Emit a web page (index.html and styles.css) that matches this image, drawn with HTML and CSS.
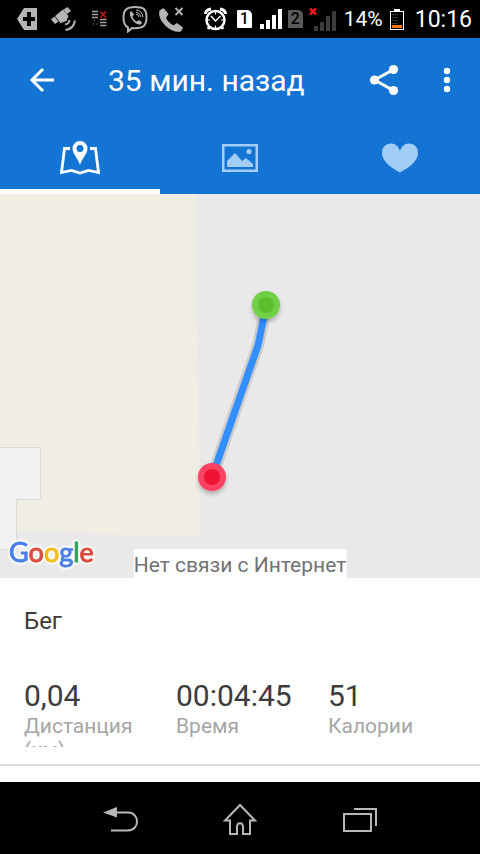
FILE: index.html
```html
<!DOCTYPE html>
<html lang="ru">
<head>
  <meta charset="UTF-8">
  <meta name="viewport" content="width=device-width, initial-scale=1.0">
  <title>Бег</title>
  <link rel="stylesheet" href="styles.css">
</head>
<body>
  <div class="status-bar">
    <div class="notifications">
      <svg width="26" height="26" viewBox="0 0 26 26" fill="#b4b4b4">
        <path fill-rule="evenodd" d="M10 2h13v22H10L3 13zM13 6v5H9v4h4v5h4v-5h4v-4h-4V6z"/>
      </svg>
      <svg width="26" height="26" viewBox="0 0 26 26" fill="#b4b4b4">
        <path d="M1 13.500l3.500-3 4 5-3.500 2.500zM13.500 3.500l4-2.500 3.500 4-4 3zM5 10l8-6.500 5.500 6.500-2 5-6 2z"/>
        <path d="M15 18.500q4-.5 4.500-4.500M15.500 24q8-.8 9.500-9.500" fill="none" stroke="#b4b4b4" stroke-width="2"/>
      </svg>
      <svg width="26" height="26" viewBox="0 0 26 26" fill="none">
        <path d="M6 5.500h6M6 8.500h6M6 11.500h6M14 13.500h6.500M14 16.500h6.500M14 19.500h6.500" stroke="#a0a0a0" stroke-width="1.500"/>
        <path d="M14.500 5.500l5.500 6M20 5.500l-5.500 6" stroke="#c81e14" stroke-width="1.500"/>
        <path d="M8 15h1M7 18h1M10.500 18h1" stroke="#a0a0a0"/>
      </svg>
      <svg width="26" height="28" viewBox="0 0 26 28" fill="none" stroke="#b4b4b4">
        <path d="M13 2C4.500 2 1.500 5 1.500 12.500c0 6 1.500 8.500 4.500 10v4l4-3.500c11 1 14.500-2 14.500-10.500S21.500 2 13 2z" stroke-width="2"/>
        <path d="M8 7l1.500-.8 2.500 3.300-1.500 2c.7 2.500 2 4 4.500 5l1.800-1.500 3.200 2.200-.8 2C14 21.500 6.500 12 8 7z" fill="#b4b4b4" stroke="none"/>
        <path d="M14 9q2.500.5 3 3M14 7q4 .5 5 5M14 5q6 .5 7 7"/>
      </svg>
      <svg width="26" height="28" viewBox="0 0 26 28" fill="#b4b4b4">
        <path d="M1.500 5.500l4-2.500 5 6-2.500 4q2.500 5 7.500 7.500l3.500-2.500 6 4.500-2 4C13 29-1.500 15 1.500 5.500z"/>
        <path d="M17.500 3l7 7M24.500 3l-7 7" stroke="#b4b4b4" stroke-width="2"/>
      </svg>
    </div>
    <div class="system">
      <svg width="28" height="26" viewBox="0 0 28 26" fill="none" stroke="#fff">
        <circle cx="12.500" cy="14" r="9" stroke-width="2.500"/>
        <path d="M2.500 8q0-4 5.500-5M22.500 8q0-4-5.500-5" stroke-width="3"/>
        <path d="M5 23l2-3M20 23l-2-3" stroke-width="3"/>
        <path d="M8 10l4.500 5 5-5" stroke-width="1.500"/>
        <path d="M12.500 6v2.500M12.500 19.500V22M4.500 14H7M18 14h2.500"/>
      </svg>
      <span class="sim">1</span>
      <svg width="24" height="20" viewBox="0 0 24 20" fill="#fff">
        <path d="M2 15h4v5H2zM8 11h4v9H8zM14 6h4v14h-4zM20 0h4v20h-4z"/>
      </svg>
      <span class="sim sim-off">2</span>
      <svg width="29" height="24" viewBox="0 0 29 24">
        <path d="M5 19h4v5H5zM11 15h4v9h-4zM17 9h4v15h-4zM23 4h4v20h-4z" fill="#3c3c3c"/>
        <path d="M1 1.500l6 6M7 1.500l-6 6" stroke="#f01414" stroke-width="2.500"/>
      </svg>
      <span class="percent">14%</span>
      <svg width="20" height="21" viewBox="0 0 20 21">
        <path d="M5 0h6v2H5z" fill="#fff"/>
        <rect x="1.500" y="2.500" width="13" height="18" fill="#000" stroke="#fff"/>
        <path d="M3 5.500h6M3 8.500h6M3 11.500h6M3 14.500h6" stroke="#333"/>
        <path d="M3 16h10v3H3z" fill="#f07818"/>
      </svg>
      <time class="clock">10:16</time>
    </div>
  </div>

  <header class="app-bar">
    <button class="icon-button back" aria-label="Назад">
      <svg width="26" height="26" viewBox="0 0 26 26" fill="none" stroke="#fff" stroke-width="3">
        <path d="M14 2L3 13l11 11M3 13h22"/>
      </svg>
    </button>
    <h1 class="title">35 мин. назад</h1>
    <button class="icon-button share" aria-label="Поделиться">
      <svg width="30" height="32" viewBox="0 0 30 32" fill="#fff">
        <path d="M24.500 5.500L5.500 16l19 10.500" fill="none" stroke="#fff" stroke-width="3"/>
        <circle cx="24.500" cy="5.500" r="4.600"/>
        <circle cx="5.500" cy="16" r="4.600"/>
        <circle cx="24.500" cy="26.500" r="4.600"/>
      </svg>
    </button>
    <button class="icon-button more" aria-label="Ещё">
      <svg width="8" height="26" viewBox="0 0 8 26" fill="#fff">
        <circle cx="4" cy="4" r="3.200"/>
        <circle cx="4" cy="13" r="3.200"/>
        <circle cx="4" cy="22" r="3.200"/>
      </svg>
    </button>
  </header>

  <nav class="tabs">
    <button class="tab active" aria-label="Карта">
      <svg width="40" height="36" viewBox="0 0 40 36">
        <path d="M10 8.500H4.500L1.500 32.500l10-2 8.500 2.500 8.500-2.500 10 2L35.500 8.500H30" fill="none" stroke="#fff" stroke-width="2.800"/>
        <path fill-rule="evenodd" d="M20 1a7.500 7.500 0 0 1 7.500 7.500C27.500 14 22 18 20 25c-2-7-7.500-11-7.500-16.500A7.500 7.500 0 0 1 20 1zm0 4a3.500 3.500 0 1 0 0 7 3.500 3.500 0 0 0 0-7z" fill="#fff"/>
      </svg>
    </button>
    <button class="tab" aria-label="Фото">
      <svg width="36" height="28" viewBox="0 0 36 28" fill="#a1cdf6">
        <path fill-rule="evenodd" d="M0 0h36v28H0zM2.500 2.500v23h31v-23z"/>
        <path d="M5 23v-6l8-8 7 8 4-3 7 6v3z"/>
        <circle cx="27" cy="7.500" r="2.600"/>
      </svg>
    </button>
    <button class="tab" aria-label="Нравится">
      <svg width="36" height="30" viewBox="0 0 36 30" fill="#a1cdf6">
        <path d="M18 29.500C13 26.500 0 20 0 10 0 4 4 .5 9 .5c4.500 0 8 3 9 8 1-5 4.500-8 9-8 5 0 9 3.500 9 9.500 0 10-13 16.500-18 19.500z"/>
      </svg>
    </button>
  </nav>

  <main>
    <section class="map">
      <svg class="map-canvas" viewBox="0 0 480 384" preserveAspectRatio="xMidYMid slice">
        <defs>
          <filter id="shadow" x="-30%" y="-30%" width="160%" height="170%">
            <feDropShadow dx="0" dy="3" stdDeviation="2" flood-opacity="0.25"/>
          </filter>
        </defs>
        <rect width="480" height="384" fill="#e9e9e9"/>
        <path d="M0 0h195l5 342h-55l-70-3-75-1z" fill="#f0ede5"/>
        <path d="M-2 253.500h42.500v52h-24v50H-2z" fill="#f1f1f1" stroke="#dcdcd6"/>
        <path d="M266 112l-7 35q-1 5-4 13l-43 123" fill="none" stroke="#cbcbcb" stroke-width="12"/>
        <path d="M266 112l-7 35q-1 5-4 13l-43 123" fill="none" stroke="#338fff" stroke-width="7"/>
        <circle cx="266" cy="111" r="14" fill="#70d046" filter="url(#shadow)"/>
        <circle cx="266" cy="111" r="8" fill="#5cbe2c"/>
        <circle cx="212" cy="283" r="14" fill="#fc4262" filter="url(#shadow)"/>
        <circle cx="212" cy="283" r="8" fill="#ee1234"/>
      </svg>
      <div class="google"><span class="blue">G</span><span class="red">o</span><span class="yellow">o</span><span class="blue">g</span><span class="green">l</span><span class="red">e</span></div>
      <p class="offline">Нет связи с Интернет</p>
    </section>

    <section class="summary">
      <h2 class="activity">Бег</h2>
      <dl class="stats">
        <div class="stat">
          <dd>0,04</dd>
          <dt>Дистанция (км)</dt>
        </div>
        <div class="stat">
          <dd>00:04:45</dd>
          <dt>Время</dt>
        </div>
        <div class="stat">
          <dd>51</dd>
          <dt>Калории</dt>
        </div>
      </dl>
    </section>
  </main>

  <footer class="nav-bar">
    <button class="nav-button" aria-label="Назад">
      <svg width="36" height="32" viewBox="0 0 36 32">
        <path d="M14 7.500h12c12 0 12 18 0 18H9" fill="none" stroke="#b8b8b8" stroke-width="2"/>
        <path d="M1 7.500L15 2v10.500z" fill="#b8b8b8"/>
      </svg>
    </button>
    <button class="nav-button" aria-label="Домой">
      <svg width="36" height="36" viewBox="0 0 36 36" fill="none" stroke="#b8b8b8" stroke-width="2">
        <path d="M18 2L3 17.500h5V31h7v-7c0-5 6-5 6 0v7h7V17.500h5z"/>
      </svg>
    </button>
    <button class="nav-button" aria-label="Недавние">
      <svg width="36" height="32" viewBox="0 0 36 32" fill="none" stroke="#b8b8b8" stroke-width="2">
        <rect x="2" y="9" width="27" height="17"/>
        <path d="M12 4h22v17"/>
      </svg>
    </button>
  </footer>
</body>
</html>
```
FILE: styles.css
```css
* {
  margin: 0;
  padding: 0;
  box-sizing: border-box;
}

body {
  min-height: 100vh;
  display: flex;
  flex-direction: column;
  font-family: Roboto, "Liberation Sans", sans-serif;
  background-color: #fff;
  color: #3c3c3c;
}

button {
  background: none;
  border: none;
  cursor: pointer;
}

svg {
  display: block;
  flex-shrink: 0;
}

/* Status bar */

.status-bar {
  height: 38px;
  padding: 0 8px 0 14px;
  display: flex;
  justify-content: space-between;
  align-items: center;
  background-color: #000;
  color: #fff;
}

.notifications {
  display: flex;
  align-items: center;
  gap: 10px;
}

.system {
  display: flex;
  align-items: center;
  gap: 6px;
}

.sim {
  width: 15px;
  height: 18px;
  border-radius: 1px 5px 1px 1px;
  background-color: #fff;
  color: #000;
  font-size: 16px;
  font-weight: 500;
  line-height: 18px;
  text-align: center;
}

.sim-off {
  background-color: #5a5a5a;
}

.percent {
  font-size: 21px;
}

.clock {
  font-size: 23px;
}

/* App bar */

.app-bar {
  height: 84px;
  padding-right: 6px;
  display: flex;
  align-items: center;
  background-color: #1474d4;
}

.icon-button {
  height: 100%;
  display: flex;
  align-items: center;
  justify-content: center;
}

.back {
  width: 84px;
}

.share {
  width: 72px;
}

.more {
  width: 54px;
}

.title {
  flex: 1;
  padding-left: 24px;
  font-size: 30px;
  font-weight: 400;
  color: #fff;
}

.tabs {
  height: 72px;
  display: flex;
  background-color: #1474d4;
}

.tab {
  flex: 1;
  display: flex;
  align-items: center;
  justify-content: center;
  border-top: 5px solid transparent;
  border-bottom: 5px solid transparent;
}

.tab.active {
  border-bottom-color: #fff;
}

/* Map */

.map {
  position: relative;
  aspect-ratio: 5 / 4;
  overflow: hidden;
}

.map-canvas {
  width: 100%;
  height: 100%;
}

.google {
  position: absolute;
  left: 9px;
  bottom: 10px;
  font-family: Lato, sans-serif;
  font-size: 27px;
  line-height: 32px;
  -webkit-text-stroke: 1px;
  filter: drop-shadow(0 0 1px #fff) drop-shadow(0 0 1px #fff) drop-shadow(0 0 1px #fff);
}

.blue {
  color: #4a80e8;
}

.red {
  color: #dc4c3c;
}

.yellow {
  color: #f4bc1c;
}

.green {
  color: #34a058;
}

.offline {
  position: absolute;
  left: 50%;
  bottom: 0;
  transform: translateX(-50%);
  padding-top: 4px;
  background-color: #fff;
  color: #737373;
  font-size: 21px;
  line-height: 25px;
  white-space: nowrap;
}

/* Summary */

.summary {
  padding: 28px 0 17px 24px;
  border-bottom: 2px solid #dcdcdc;
}

.activity {
  font-size: 24px;
  font-weight: 400;
  line-height: 30px;
}

.stats {
  margin-top: 42px;
  display: grid;
  grid-template-columns: repeat(3, 1fr);
}

.stat {
  padding-right: 24px;
}

.stat dd {
  font-size: 30px;
  line-height: 36px;
}

/* second line of a long label is clipped */
.stat dt {
  height: 33px;
  overflow: hidden;
  font-size: 21px;
  line-height: 24px;
  color: #a5a5a5;
}

/* Navigation bar */

.nav-bar {
  height: 72px;
  margin-top: auto;
  padding: 6px 60px 0;
  display: flex;
  background-color: #000;
}

.nav-button {
  flex: 1;
  display: flex;
  align-items: center;
  justify-content: center;
}
```
